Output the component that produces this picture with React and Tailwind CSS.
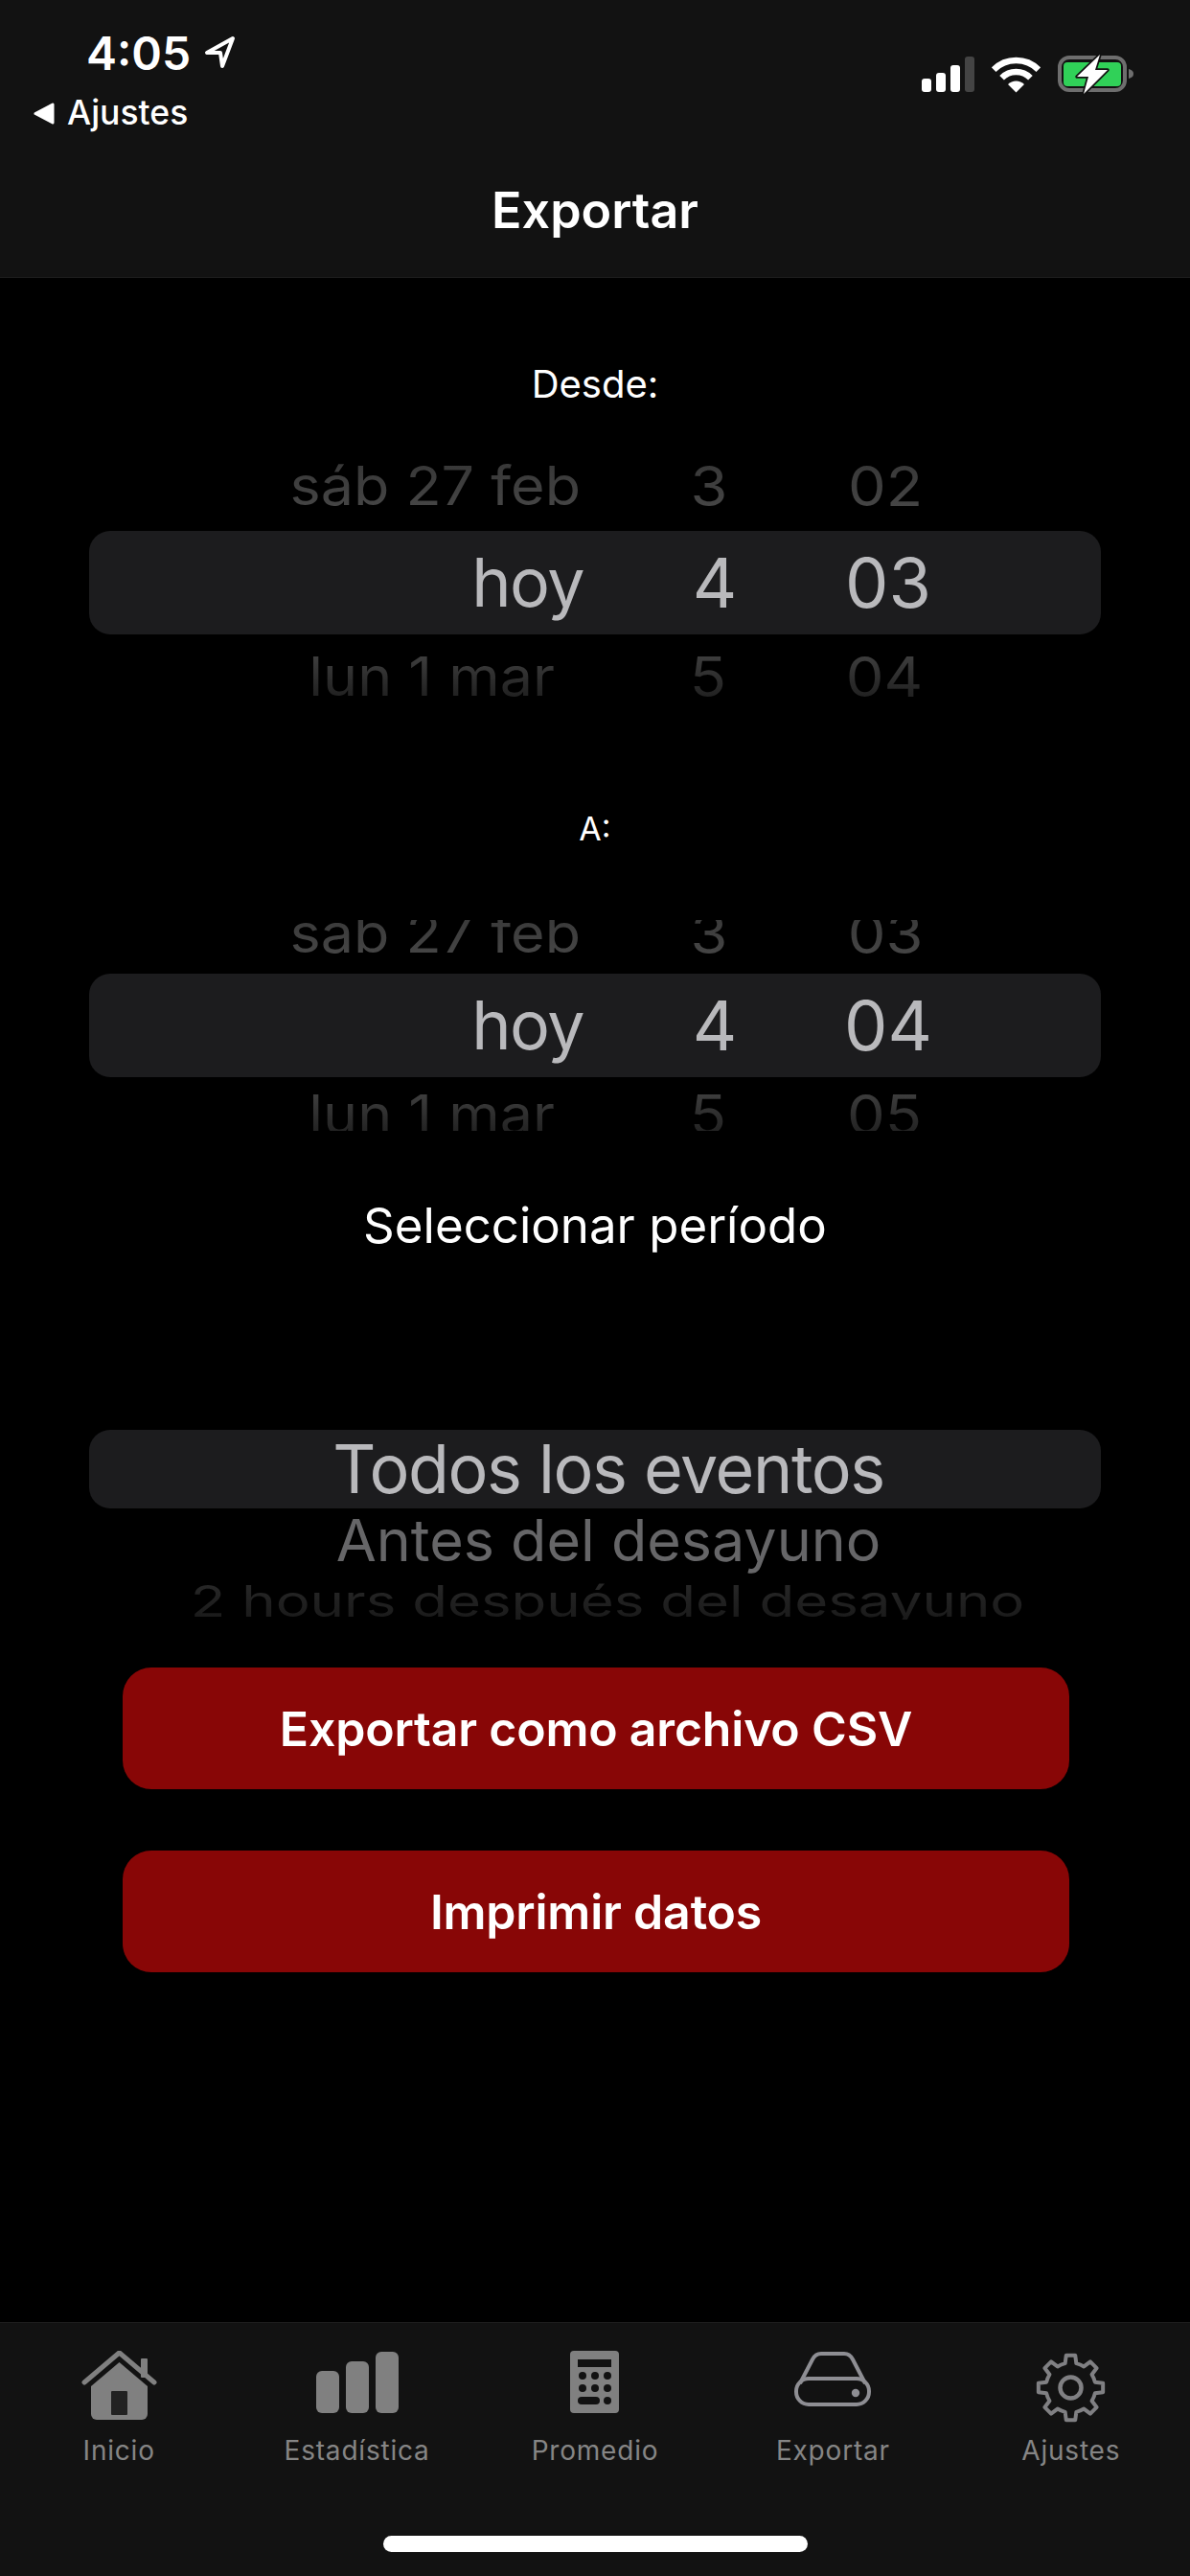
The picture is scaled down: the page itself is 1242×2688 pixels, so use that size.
const gearPath = (() => {
  const cx = 36.5;
  const cy = 36.5;
  const outer = 34;
  const root = 26;
  const pt = (r, deg) => {
    const a = (deg * Math.PI) / 180;
    return `${(cx + r * Math.cos(a)).toFixed(2)} ${(cy + r * Math.sin(a)).toFixed(2)}`;
  };
  let d = '';
  for (let i = 0; i < 8; i++) {
    const a = i * 45 - 90;
    d += `${i === 0 ? 'M' : 'L'}${pt(root, a - 13)} L${pt(outer, a - 8)} L${pt(outer, a + 8)} L${pt(root, a + 13)} `;
    d += `A${root} ${root} 0 0 1 ${pt(root, a + 32)} `;
  }
  return d + 'Z';
})();

function LocationArrow() {
  return (
    <svg width="34" height="36" viewBox="0 0 34 36" className="ml-[13px] mt-[5px]">
      <path d="M31 3 L4 18 H18 L20 32 Z" fill="none" stroke="#fff" strokeWidth="4" strokeLinejoin="round" />
    </svg>
  );
}

function StatusIcons() {
  return (
    <div className="flex items-start pt-[58px] pr-[58px]">
      {/* signal */}
      <div className="flex items-end gap-[5px] h-[38px] mb-[1px]">
        <div className="w-[10px] h-[14px] rounded-[3px] bg-white" />
        <div className="w-[10px] h-[20px] rounded-[3px] bg-white" />
        <div className="w-[10px] h-[28px] rounded-[3px] bg-white" />
        <div className="w-[10px] h-[37px] rounded-[3px] bg-[#444444]" />
      </div>
      {/* wifi */}
      <svg width="51" height="39" viewBox="0 0 51 39" className="ml-[18px]">
        <path d="M2.2 14.7 A33 33 0 0 1 48.8 14.7" fill="none" stroke="#fff" strokeWidth="6.5" />
        <path d="M10.6 23.2 A21 21 0 0 1 40.4 23.2" fill="none" stroke="#fff" strokeWidth="6.5" />
        <path d="M25.5 38.5 L17 30 A12 12 0 0 1 34 30 Z" fill="#fff" />
      </svg>
      {/* battery */}
      <svg width="80" height="40" viewBox="0 0 80 40" className="ml-[18px] overflow-visible">
        <rect x="2" y="2" width="68" height="34" rx="10" fill="none" stroke="#6e6e6e" strokeWidth="4" />
        <rect x="6" y="7" width="60" height="25" rx="4" fill="#30d158" />
        <path d="M74 14 C78 15 79 17 79 19 C79 21 78 23 74 24 Z" fill="#6e6e6e" />
        <path d="M44 -1 L20 22 H32 L27 40 L52 15 H39 Z" fill="#fff" stroke="#121212" strokeWidth="3.5" paintOrder="stroke" strokeLinejoin="round" />
      </svg>
    </div>
  );
}

function Header() {
  return (
    <div className="h-[290px] shrink-0 bg-[#121212] border-b border-[#1e1e1e]">
      <div className="flex justify-between">
        <div>
          <div className="flex items-start pl-[90px] pt-[32px]">
            <span className="text-[48px] leading-[48px] font-semibold text-white">4:05</span>
            <LocationArrow />
          </div>
          <div className="flex items-center pl-[34px] mt-[24px] h-[28px]">
            <svg width="23" height="23" viewBox="0 0 23 23">
              <path d="M21 2 V21 L3 11.5 Z" fill="#fff" stroke="#fff" strokeWidth="3" strokeLinejoin="round" />
            </svg>
            <span className="ml-[13px] text-[35.5px] leading-none font-medium text-white">Ajustes</span>
          </div>
        </div>
        <StatusIcons />
      </div>
      <div className="mt-[63px] h-[50px] flex items-center justify-center text-[52px] leading-none font-semibold text-white">
        Exportar
      </div>
    </div>
  );
}

function Wheel({ text, size, gradient }) {
  return (
    <span className={`block whitespace-nowrap leading-[1.3] bg-clip-text text-transparent bg-linear-to-b ${size} ${gradient}`}>
      {text}
    </span>
  );
}

// one row of the date picker, cells are placed by their widths and margins
function DateRow({ date, hour, minute, dateCell, hourCell, minuteCell, gradient }) {
  return (
    <div className="flex h-[60px] ml-[93px] scale-y-[0.92]">
      <div className={`flex items-center justify-end h-full ${dateCell}`}>
        <Wheel text={date} size="text-[61px]" gradient={gradient} />
      </div>
      <div className={`flex items-center justify-center h-full w-[154px] ${hourCell}`}>
        <Wheel text={hour} size="text-[63px]" gradient={gradient} />
      </div>
      <div className={`flex items-center justify-center h-full w-[154px] ${minuteCell}`}>
        <Wheel text={minute} size="text-[63px]" gradient={gradient} />
      </div>
    </div>
  );
}

function SelectedRow({ minute }) {
  return (
    <div className="flex h-[108px] mx-[93px] rounded-[22px] bg-[#1c1c1e] text-[72px] text-[#b9b9bc] leading-none">
      <div className="flex items-center justify-end w-[516px] text-[70px] tracking-[-1.5px]">hoy</div>
      <div className="flex items-center justify-center w-[154px] ml-[60px]">4</div>
      <div className="flex items-center justify-center w-[154px] ml-[27px]">{minute}</div>
    </div>
  );
}

function Label({ children, className }) {
  return (
    <div className={`h-[50px] flex items-center justify-center leading-none text-white ${className}`}>
      {children}
    </div>
  );
}

function HomeIcon() {
  return (
    <svg width="79" height="72" viewBox="0 0 79 72">
      <rect x="62" y="8" width="7" height="20" rx="1" fill="#808080" />
      <path d="M3 33 L39.5 2 L76 33" fill="none" stroke="#808080" strokeWidth="5" strokeLinecap="round" strokeLinejoin="round" />
      <path d="M39.5 12 L69 37 V66 A6 6 0 0 1 63 72 H16 A6 6 0 0 1 10 66 V37 Z" fill="#808080" />
      <rect x="31" y="42" width="17" height="25" rx="1" fill="#121212" opacity="0.85" />
    </svg>
  );
}

function BarsIcon() {
  return (
    <div className="flex items-end gap-[7px] h-[64px] mt-[1px]">
      <div className="w-[24px] h-[44px] rounded-[6px] bg-[#808080]" />
      <div className="w-[24px] h-[54px] rounded-[6px] bg-[#808080]" />
      <div className="w-[24px] h-[64px] rounded-[6px] bg-[#808080]" />
    </div>
  );
}

function CalcIcon() {
  const dots = [[13, 26], [26, 26], [39, 26], [13, 39], [26, 39], [39, 39], [39, 52]];
  return (
    <svg width="51" height="65" viewBox="0 0 51 65">
      <rect width="51" height="65" rx="4" fill="#808080" />
      <rect x="8" y="9" width="35" height="8" fill="#121212" />
      {dots.map(([x, y]) => (
        <circle key={`${x}-${y}`} cx={x} cy={y} r="4" fill="#121212" />
      ))}
      <rect x="8" y="48" width="23" height="8" rx="4" fill="#121212" />
    </svg>
  );
}

function DriveIcon() {
  return (
    <svg width="80" height="57" viewBox="0 0 80 57" className="mt-[1px]">
      <g fill="none" stroke="#8e8e93" strokeWidth="4">
        <rect x="2" y="28" width="76" height="27" rx="13" />
        <path d="M6 33 L19 8 Q22 2 28 2 H52 Q58 2 61 8 L74 33" />
      </g>
      <circle cx="64" cy="43" r="4.2" fill="#8e8e93" />
    </svg>
  );
}

function GearIcon() {
  return (
    <svg width="73" height="73" viewBox="0 0 73 73" className="mt-[2px]">
      <path d={gearPath} fill="none" stroke="#808083" strokeWidth="4" strokeLinejoin="round" />
      <circle cx="36.5" cy="36.5" r="11" fill="none" stroke="#808083" strokeWidth="4.5" />
    </svg>
  );
}

const tabs = [
  { label: 'Inicio', icon: HomeIcon },
  { label: 'Estadística', icon: BarsIcon },
  { label: 'Promedio', icon: CalcIcon },
  { label: 'Exportar', icon: DriveIcon },
  { label: 'Ajustes', icon: GearIcon },
];

function TabBar() {
  return (
    <div className="h-[265px] shrink-0 bg-[#121212] border-t border-[#1e1e1e] pt-[29px]">
      <div className="grid grid-cols-5">
        {tabs.map(({ label, icon: Icon }) => (
          <div key={label} className="flex flex-col items-center">
            <div className="h-[75px] flex items-start justify-center">
              <Icon />
            </div>
            <div className="mt-[9px] h-[40px] flex items-center text-[28px] tracking-[0.8px] leading-none text-[#858585]">
              {label}
            </div>
          </div>
        ))}
      </div>
      <div className="mt-[69px] mx-auto w-[443px] h-[17px] rounded-full bg-white" />
    </div>
  );
}

function RedButton({ children, className }) {
  return (
    <button className={`block w-[988px] h-[127px] ml-[128px] rounded-[30px] bg-[#880606] text-[50px] tracking-[-0.2px] leading-none font-semibold text-white ${className}`}>
      {children}
    </button>
  );
}

export default function App() {
  const topGrad = 'from-[#343434] to-[#4a4a4a]';
  const bottomGrad = 'from-[#484848] to-[#161616]';

  return (
    <div className="w-[1242px] h-[2688px] flex flex-col bg-black overflow-hidden font-['Inter',sans-serif]">
      <Header />

      <div className="flex-1">
        {/* desde */}
        <Label className="mt-[86px] text-[40px]">Desde:</Label>
        <div className="mt-[52px]">
          <DateRow date="sáb 27 feb" hour="3" minute="02" dateCell="w-[513px]" hourCell="ml-[57px]" minuteCell="ml-[30px]" gradient={topGrad} />
        </div>
        <div className="mt-[16px]">
          <SelectedRow minute="03" />
        </div>
        <div className="mt-[15px]">
          <DateRow date="lun 1 mar" hour="5" minute="04" dateCell="w-[486px]" hourCell="ml-[83px]" minuteCell="ml-[30px]" gradient={bottomGrad} />
        </div>

        {/* a */}
        <Label className="mt-[103px] text-[34px]">A:</Label>
        <div className="mt-[70px] h-[45px] overflow-hidden">
          <div className="-mt-[15px]">
            <DateRow date="sáb 27 feb" hour="3" minute="03" dateCell="w-[513px]" hourCell="ml-[57px]" minuteCell="ml-[30px]" gradient={topGrad} />
          </div>
        </div>
        <div className="mt-[11px]">
          <SelectedRow minute="04" />
        </div>
        <div className="mt-[10px] h-[46px] overflow-hidden">
          <DateRow date="lun 1 mar" hour="5" minute="05" dateCell="w-[486px]" hourCell="ml-[83px]" minuteCell="ml-[30px]" gradient={bottomGrad} />
        </div>

        <div className="mt-[68px] h-[60px] flex items-center justify-center text-[51px] leading-none text-white">
          Seleccionar período
        </div>

        {/* evento */}
        <div className="mt-[184px] mx-[93px] h-[82px] rounded-[22px] bg-[#1c1c1e] flex items-center justify-center pl-[28px] text-[70px] tracking-[-1.4px] leading-none text-[#b9b9bc]">
          Todos los eventos
        </div>
        <div className="mt-[3px] h-[60px] flex items-center justify-center pl-[28px] text-[61px] leading-none text-[#666668]">
          Antes del desayuno
        </div>
        <div className="mt-[13px] h-[40px] overflow-hidden pl-[26px]">
          <div className="h-[40px] flex items-center justify-center scale-y-[0.76]">
            <Wheel text="2 hours después del desayuno" size="text-[60px]" gradient="from-[#2c2c2c] to-[#161616]" />
          </div>
        </div>

        <RedButton className="mt-[50px]">Exportar como archivo CSV</RedButton>
        <RedButton className="mt-[64px]">Imprimir datos</RedButton>
      </div>

      <TabBar />
    </div>
  );
}
